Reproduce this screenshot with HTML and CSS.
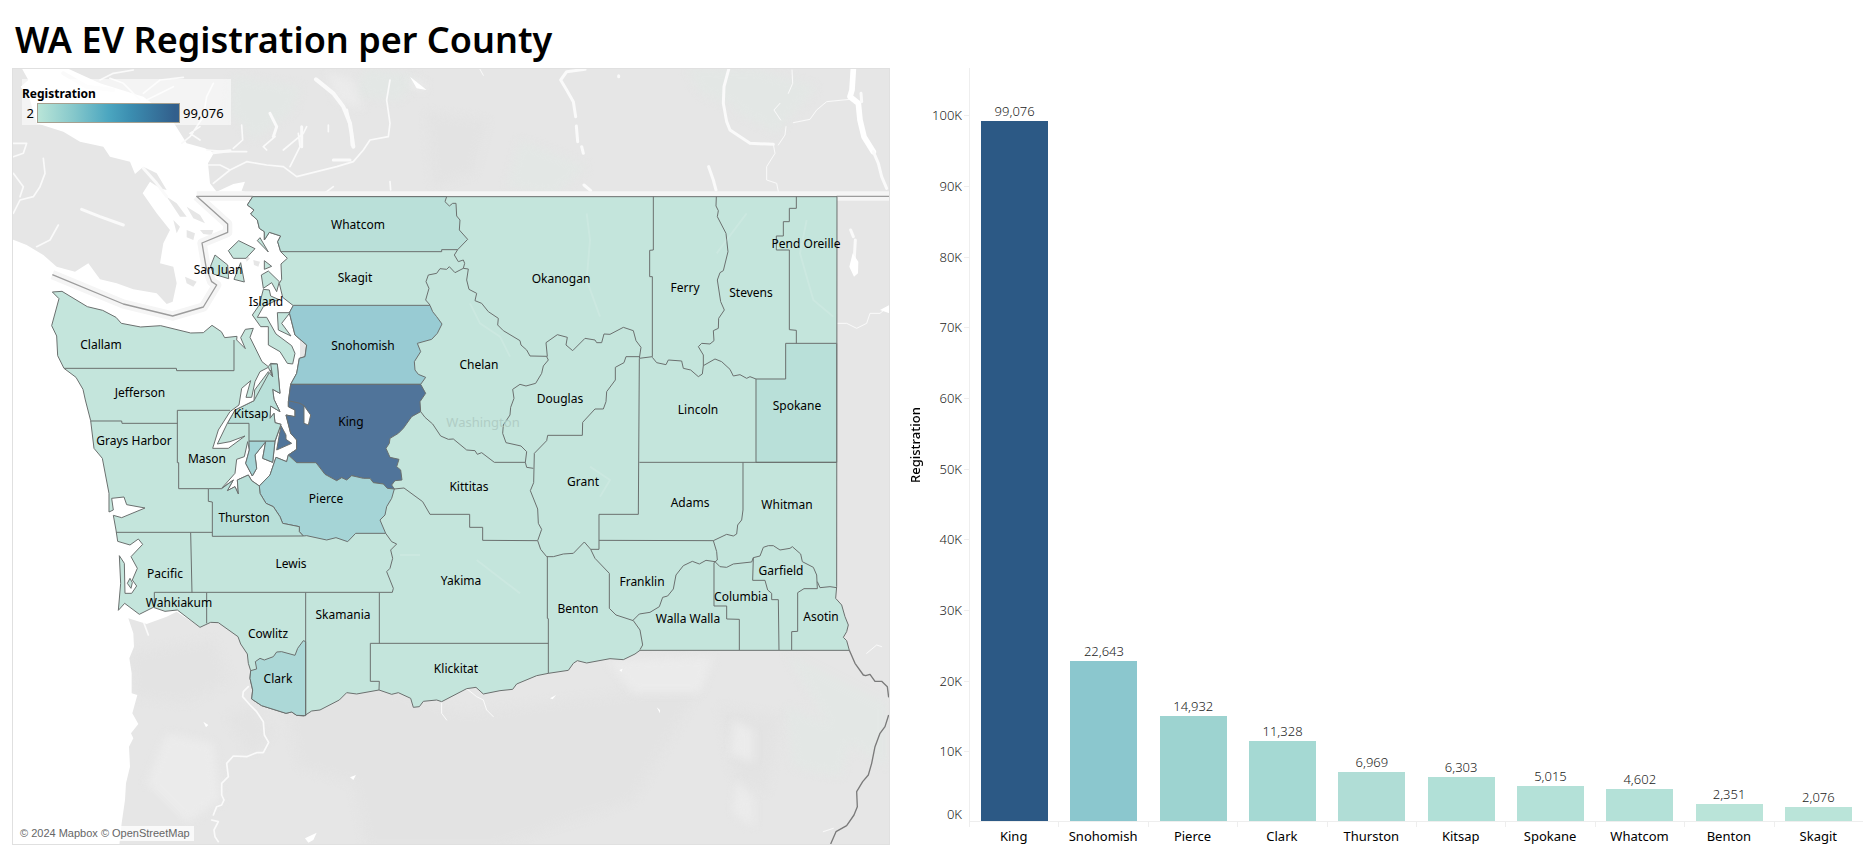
FILE: index.html
```
<!DOCTYPE html>
<html lang="en">
<head>
<meta charset="utf-8">
<title>WA EV Registration per County</title>
<link rel="stylesheet" href="styles.css">
</head>
<body>
<main class="dashboard">
<h1 class="title">WA EV Registration per County</h1>
<section class="map" aria-label="Registration map">
<svg class="map-canvas" viewBox="12 68 878 777" role="img" aria-label="Counties of Washington">
<g transform="scale(0.333333)">
<rect class="land" x="36" y="204" width="2634" height="2331"/>
<path class="tint" d="M1100,204L1260,230L1200,300L1060,290ZM700,230L900,260L880,330L760,420L690,330ZM1560,420L1760,500L1660,590L1520,560ZM2060,204L2300,210L2230,330L2100,280ZM2250,204L2450,260L2330,400L2200,330ZM2360,2120L2560,2200L2520,2330L2380,2300ZM2360,1960L2660,2110L2660,2300L2500,2200Z"/>
<path class="shade" d="M820,1960L1400,2140L1700,2100L2100,2060L1900,2400L1500,2535L1100,2535L1060,2350L900,2300ZM680,2150L760,2120L820,2200L750,2260ZM390,1960L640,1920L690,2040L560,2110L400,2090ZM2160,2120L2340,2150L2300,2380L2200,2330ZM1280,340L1460,360L1420,520L1300,560ZM200,520L420,600L380,760L220,700Z"/>
<path class="light" d="M500,2200L640,2230L660,2400L560,2470L440,2350ZM1820,1980L2140,1970L2100,2080L1900,2080ZM2200,2160L2260,2190L2260,2290L2190,2260ZM2210,2340L2260,2400L2260,2480L2200,2440ZM1220,230L1280,250L1270,275L1240,265ZM980,220L1060,240L1090,330L1010,300Z"/>
<path class="water" d="M65,204L200,204L300,250L430,290L510,350L560,430L615,445L642,458L624,490L630,550L650,575L700,552L735,545L725,572L780,590L900,600L900,1500L600,1700L600,1882L530,1835L500,1850L440,1872L385,1855L400,1900L402,1940L388,1975L395,2020L395,2080L412,2085L397,2140L415,2172L393,2200L400,2215L387,2240L390,2300L378,2350L375,2400L365,2470L358,2535L36,2535L36,204Z"/>
<path class="land" d="M36,204L65,204L85,240L62,260L90,300L110,370L190,395L240,425L310,440L330,470L390,485L405,522L430,500L470,520L500,570L480,565L450,545L428,580L470,640L510,690L490,730L480,790L520,800L530,850L518,905L500,912L470,880L400,868L350,850L300,838L265,790L225,815L170,800L130,765L80,735L36,718Z"/>
<path class="land" d="M500,590L530,610L560,650L540,650ZM560,620L600,645L615,670L580,655ZM600,690L640,690L635,705L610,702ZM560,690L585,700L580,720L560,712ZM520,660L540,680L530,700ZM555,830L590,845L580,860L560,850ZM760,780L780,785L775,800L762,795ZM735,765L750,775L740,785Z"/>
<g class="lakes">
<path class="w2" d="M300,240L340,220L400,210M330,235L370,250L420,300M430,280L480,240L550,232M440,300L520,260M640,250L620,290L610,350L570,410L545,430M600,380L570,400L600,420M620,450L680,455L740,455M625,495L660,495L690,510L740,485L800,495L850,500L890,530L950,515L1010,500L1060,485L1090,450L1110,420L1165,410L1170,370L1160,300L1170,240M640,550L690,510M725,375L728,420L700,445M800,450L790,440L825,410M895,400L900,440L870,500M850,450L910,400L920,380M40,430L80,430L70,460L40,470M130,475L135,520L120,560L100,590L60,600L40,640M40,520L70,560L60,590M175,675L150,720L110,740M985,375L985,395M960,590L1000,560M1170,545L1172,570"/>
<path class="w3" d="M810,340L830,380L820,410M245,628L300,650L370,675M640,458L690,452M430,505L470,550L500,590M905,380L905,440M1000,480L1050,480"/>
<path class="w4" d="M190,220L260,260L340,270M948,238L1000,280L1030,320L1050,370L1060,440"/>
<path class="w3" d="M1040,330L1055,400L1056,435M1755,208L1700,215L1682,240L1700,270L1720,305L1727,350M1729,378L1733,425M1745,440L1750,460M1752,555L1772,572M2186,208L2172,260L2170,310L2180,365L2190,390L2250,430L2320,433M2126,500L2140,540L2148,570"/>
<path class="w1" d="M2320,433L2325,460L2300,500L2300,540L2330,550L2335,575M2335,435L2355,405L2358,380M2380,368L2430,358L2450,330L2480,305L2550,298M2376,210L2378,250L2365,280M2340,310L2322,330L2342,360M1440,208L1450,226M2500,970L2540,970L2570,985L2600,970L2610,940L2640,940L2665,920M2600,1960L2630,1935L2645,1940M2470,2495L2500,2485"/>
<path class="w5" d="M2560,208L2556,270L2550,290L2575,310L2580,360L2592,410L2620,455"/>
<path class="w3" d="M2620,455L2635,490L2645,530L2660,565M2583,280L2585,305M2552,690L2560,710M2566,720L2562,790M1856,227L1856,230"/>
<path class="lake" d="M2558,760L2575,785L2574,820L2562,830L2548,800ZM2640,930L2668,915L2668,940ZM1970,2122L1980,2130L1980,2140ZM1230,230L1280,270L1250,265ZM610,2165L625,2175L618,2182ZM1050,2332L1068,2325L1060,2340ZM915,2515L950,2498L940,2520L925,2528ZM1858,2010L1868,2006L1864,2016ZM1650,2095L1668,2085L1658,2098Z"/>
<path class="w2" d="M745,2060L730,2075L728,2090L750,2115L770,2135L790,2165L793,2205L806,2227L790,2258L770,2258L740,2270L700,2268L680,2290L685,2330L665,2350L665,2385L672,2400L665,2415L650,2420L640,2445M635,2460L655,2465L642,2490L645,2510L655,2525M432,1870L445,1905"/>
<path class="w1" d="M1400,2066L1430,2090L1450,2100L1460,2130L1480,2150M1325,2105L1325,2140L1340,2160"/>
</g>
<path class="halo" d="M590,588H2670M590,588L683,672L683,697L606,729L618,800L635,845L650,855L610,921L518,948L370,912L157,824"/>
<path class="state-line" d="M2510,589H2670M758,589H590L683,672L683,697L606,729L618,800L635,845L650,855L610,921L518,948L370,912L157,824"/>
<path class="state-line dark" d="M2548,1951L2565,1990L2590,2025L2597,2027L2610,2023L2625,2044L2645,2044L2662,2060L2666,2092M2666,2145L2655,2180L2640,2200L2625,2240L2615,2290L2605,2325L2588,2345L2570,2375L2572,2420L2562,2445L2540,2477L2508,2495L2492,2532"/>
<g class="county">
<path d="M758,590H2511L2510,1760L2507,1795L2525,1815L2535,1850L2545,1875L2540,1895L2530,1912L2540,1922L2548,1951H1920L1905,1962L1870,1979L1830,1976L1760,1989L1732,1982L1720,1990L1705,2011L1645,2020L1610,2027L1550,2052L1538,2068L1500,2072L1450,2082L1428,2062L1400,2066L1325,2105L1310,2100L1270,2104L1258,2120L1240,2122L1232,2095L1195,2078L1175,2083L1137,2070L1070,2082L1040,2078L1018,2100L960,2130L935,2133L912,2148L890,2146L875,2136L858,2140L785,2117L755,2097L758,2070L750,2035L752,2012L745,1990L742,1962L722,1932L714,1910L655,1868L632,1867L600,1882L532,1830L495,1834L460,1822L418,1843L374,1810L355,1831L362,1750L358,1667L373,1690L375,1780H395L410,1758L397,1740L412,1705L393,1670L428,1633L415,1617L390,1635L353,1624L348,1590L340,1546L365,1553L435,1524L380,1514L372,1491L335,1495L340,1530L327,1536V1480L307,1375L282,1345L272,1262L256,1200L249,1168L228,1132L192,1105L173,1067L170,1008L155,977L177,896L157,876L186,874L262,920L308,931L348,952L364,970L422,981L482,977L572,999L610,998L636,976L664,995L674,1013L711,1009L710,1020L736,1046L722,1013L736,988L760,985L750,1012L786,1085L805,1100L812,1090L832,1092L840,1180L818,1168L822,1198L840,1235L812,1218L810,1255L822,1240L825,1268L843,1273L825,1325L818,1387L788,1375L797,1325L765,1365L770,1405L757,1428L737,1390L748,1350L743,1325L733,1370L710,1378L705,1420L665,1465L700,1440L682,1472L705,1460L715,1482L712,1440L745,1425L755,1442L778,1458L810,1425L828,1372L860,1385L865,1365L890,1348L890,1320L872,1300L858,1245L885,1250V1230L865,1220V1205L872,1153L890,1120L898,1075L915,1070L920,1035L885,1005L868,938L880,917L848,892L838,850L845,838L843,792L862,775L842,755L833,725L842,708L808,697L793,720V695L778,685L772,660L752,642L762,630L742,615Z"/>
<path class="c-whatcom" d="M758,590H1340L1335,605L1348,618L1358,610H1368L1370,648L1380,660L1378,690L1403,718L1373,749H1325V755H842L833,725L842,708L808,697L793,720V695L778,685L772,660L752,642L762,630L742,615Z"/>
<path class="c-snohomish" d="M880,916H1290L1298,935L1310,950L1326,972L1312,1000L1295,1018L1252,1030L1262,1055L1243,1085L1245,1110L1255,1123L1277,1132L1262,1153H872L890,1120L898,1075L915,1070L920,1035L885,1005L868,938Z"/>
<path class="c-king" d="M872,1153H1262L1277,1180L1260,1205L1262,1235L1235,1250L1210,1285L1195,1300L1170,1315L1168,1330L1158,1345L1170,1372L1197,1378L1190,1400L1202,1410L1206,1440L1185,1442L1175,1455L1183,1467H1162L1150,1452L1120,1448L1110,1435H1090L1055,1427L1040,1440L1025,1433L1010,1442L975,1423L948,1388H890L865,1365L890,1348V1320L872,1300L858,1245L885,1250V1230L865,1220V1205ZM843,1277L858,1305V1318L875,1330L830,1350Z"/>
<path class="c-pierce" d="M778,1458L810,1425L828,1372L860,1385L865,1365L890,1388H948L975,1423L1010,1442L1025,1433L1040,1440L1055,1427L1090,1435H1110L1120,1448L1150,1452L1162,1465L1183,1467L1175,1495L1160,1520L1155,1545L1140,1560L1157,1600H1067L1043,1625L1008,1613L980,1620L920,1607L910,1608L898,1595V1580L848,1570L840,1550L820,1520L798,1510L780,1480ZM747,1323H825L818,1387L788,1375L797,1325L765,1365L770,1405L757,1428L737,1390L748,1350Z"/>
<path class="c-thurston" d="M625,1466H665L700,1440L682,1472L705,1460L715,1482L712,1440L745,1425L755,1442L778,1458L780,1480L798,1510L820,1520L840,1550L848,1570L898,1580V1595L910,1608L637,1609V1506L625,1504Z"/>
<path class="c-thurston" d="M812,1110L762,1202L705,1230L682,1270H747V1323H825L843,1273L825,1268L822,1240L810,1255L812,1218L840,1235L822,1198L818,1168L840,1180L832,1092H812L818,1130Z"/>
<path class="c-spokane" d="M2357,1030H2510V1387H2268V1137H2357Z"/>
<path class="c-clark" d="M752,2012L770,2007L766,1985L780,1975L793,1980L820,1970L830,1956L845,1955L885,1966L893,1945L910,1922L917,1925V2147L890,2146L875,2136L858,2140L785,2117L755,2097L758,2070L750,2035Z"/>
<path d="M790,868L808,870L812,888L835,898L790,920L772,952H800L828,1002L875,1037L885,1060L878,1092L862,1090L840,1055L805,1035V980H782L757,945L778,915ZM832,938H870L845,970L873,1008L835,990ZM784,825L805,813L838,845L830,875L815,848L790,865ZM685,752L716,722L765,746L738,775H700ZM645,765L683,795L686,836L640,822L632,798ZM722,788L733,846L702,838ZM780,713L805,756L772,722ZM793,782L815,799L793,808ZM382,1750L390,1735L397,1748L393,1765Z"/>
<path class="inlet" d="M805,1102L780,1115L765,1145L755,1192H738L752,1142L725,1165L717,1215L690,1235L655,1290L638,1345H685L735,1308L690,1325L652,1332L682,1270L705,1230L762,1202L764,1170L805,1115L818,1130ZM912,1217L932,1245L925,1275L912,1270Z"/>
<path class="line" d="M1373,749L1363,765L1375,785L1390,780L1394,790L1390,805L1365,818L1348,800L1340,808L1320,806L1310,820L1285,825L1278,845L1287,865L1277,900L1290,915M1390,805L1405,807L1400,840L1407,868L1430,880L1425,902L1445,910L1465,935L1495,955L1493,975L1510,992L1560,1022L1563,1035L1580,1050L1590,1068L1642,1069L1638,1028L1672,1004L1702,1012L1698,1035L1718,1052L1755,1015L1785,1020L1790,1028H1805L1812,1002L1830,1003L1870,982L1900,992L1908,1022L1923,1042L1918,1075L1957,1070V830L1949,830V751L1960,750V590"/>
<path class="line" d="M2149,590L2148,618L2155,632L2152,650L2178,700L2184,755L2170,812L2160,818L2152,840L2162,905L2173,930L2156,955L2155,985L2140,992L2142,1022L2130,1032L2105,1030L2095,1040L2110,1065L2110,1097L2107,1122L2095,1130L2072,1110L2050,1105L2045,1083L2005,1080L1998,1094L1970,1088L1957,1072M2110,1097L2145,1077L2165,1085L2190,1108L2200,1128L2220,1124L2240,1135L2250,1130L2268,1137M2389,590V625H2368V665H2350V708H2329V750H2368V989L2389,991V1030M1918,1387H2510M2229,1387V1530L2225,1560L2213,1575L2210,1602L2200,1608L2180,1603L2140,1622L2150,1655L2152,1680L2142,1688"/>
<path class="line" d="M1640,1070L1645,1080L1630,1098L1625,1120L1607,1150L1578,1158L1560,1153L1538,1168L1542,1195L1532,1222L1530,1245L1510,1275L1508,1300L1518,1328L1563,1338L1580,1355L1576,1387L1580,1402L1600,1405M1576,1387H1483L1445,1358L1432,1363L1425,1352L1400,1350L1360,1317L1345,1318L1322,1308L1298,1272L1275,1252L1262,1235M1918,1070H1878L1872,1088L1846,1102V1140L1820,1175L1818,1205L1810,1227H1785L1748,1267L1747,1306H1643L1640,1322L1603,1360L1601,1448L1591,1472L1613,1527L1615,1570L1625,1588L1613,1622L1622,1648L1640,1670H1660L1690,1662L1720,1660L1753,1626L1772,1648H1797V1543H1915L1918,1076M1797,1621L2140,1622"/>
<path class="line" d="M1183,1467L1212,1464L1268,1505L1290,1543H1409V1582H1448V1621L1612,1622M1157,1600L1175,1625L1190,1632L1172,1650L1178,1675L1170,1705L1160,1715L1180,1765L1177,1777H463V1822M1138,1778V1930M1645,1930H1111V2044H1138L1137,2070M1642,1670V1855L1645,1856V2020M917,1778V2146M620,1778V1870M572,1598L576,1778M348,1597H637M536,1466H625M532,1231H690M532,1231V1388H536V1466M272,1263H365L366,1270H532M192,1105H529L530,1112H702V1020M865,1202L900,1210L912,1217"/>
<path class="line" d="M1772,1648L1785,1675L1828,1720V1825L1848,1845L1900,1862L1920,1890L1928,1935L1920,1949M1898,1862L1918,1842L1950,1837L1978,1820L1988,1792L2003,1788L2020,1767L2028,1725L2050,1697L2077,1684L2098,1692L2118,1681L2145,1685L2160,1700L2180,1702L2200,1692L2255,1686L2260,1673L2280,1668L2290,1642L2305,1637H2320L2340,1650L2370,1645L2377,1640L2402,1662L2407,1685L2440,1702L2450,1725L2452,1766H2412L2393,1778V1894L2375,1895V1950M2452,1745L2460,1763L2490,1760L2510,1763M2260,1673L2258,1741H2295L2303,1770L2315,1780V1799H2335L2337,1950M2142,1688V1818H2180V1857L2218,1858V1950"/>
</g>
<path class="rivers-on-land" d="M1410,910L1440,970L1500,1010L1530,1070M1760,640L1770,720L1760,840L1800,950M2240,640L2150,760M2420,660L2400,760L2440,900L2500,950M1770,1400L1830,1440L1800,1490M1200,1665H1260M1430,1680L1560,1780"/>
</g>
<text class="state-name" x="483" y="427">Washington</text>
<g class="names">
<text x="358" y="229">Whatcom</text>
<text x="218" y="274">San Juan</text>
<text x="355" y="282">Skagit</text>
<text x="266" y="306">Island</text>
<text x="101" y="349">Clallam</text>
<text x="140" y="397">Jefferson</text>
<text x="251" y="418">Kitsap</text>
<text x="134" y="445">Grays Harbor</text>
<text x="363" y="350">Snohomish</text>
<text x="351" y="426">King</text>
<text x="326" y="503">Pierce</text>
<text x="244" y="522">Thurston</text>
<text x="207" y="463">Mason</text>
<text x="291" y="568">Lewis</text>
<text x="165" y="578">Pacific</text>
<text x="179" y="607">Wahkiakum</text>
<text x="268" y="638">Cowlitz</text>
<text x="343" y="619">Skamania</text>
<text x="278" y="683">Clark</text>
<text x="461" y="585">Yakima</text>
<text x="456" y="673">Klickitat</text>
<text x="578" y="613">Benton</text>
<text x="469" y="491">Kittitas</text>
<text x="583" y="486">Grant</text>
<text x="479" y="369">Chelan</text>
<text x="560" y="403">Douglas</text>
<text x="698" y="414">Lincoln</text>
<text x="690" y="507">Adams</text>
<text x="561" y="283">Okanogan</text>
<text x="685" y="292">Ferry</text>
<text x="751" y="297">Stevens</text>
<text x="806" y="248">Pend Oreille</text>
<text x="797" y="410">Spokane</text>
<text x="787" y="509">Whitman</text>
<text x="642" y="586">Franklin</text>
<text x="688" y="623">Walla Walla</text>
<text x="741" y="601">Columbia</text>
<text x="781" y="575">Garfield</text>
<text x="821" y="621">Asotin</text>
</g>
</svg>
<div class="legend">
<h2 class="legend-title">Registration</h2>
<div class="legend-scale"><span class="legend-min">2</span><span class="legend-ramp"></span><span>99,076</span></div>
</div>
<p class="credit">© 2024 Mapbox © OpenStreetMap</p>
</section>
<section class="chart" aria-label="Registration by county">
<h2 class="axis-title">Registration</h2>
<div class="axis">
<div class="head"></div>
<div class="step"><span>100K</span></div>
<div class="step"><span>90K</span></div>
<div class="step"><span>80K</span></div>
<div class="step"><span>70K</span></div>
<div class="step"><span>60K</span></div>
<div class="step"><span>50K</span></div>
<div class="step"><span>40K</span></div>
<div class="step"><span>30K</span></div>
<div class="step"><span>20K</span></div>
<div class="step"><span>10K</span><span class="zero">0K</span></div>
</div>
<div class="plot">
<div class="column"><span>99,076</span><div class="bar b1" style="height:92.9%"></div></div>
<div class="column"><span>22,643</span><div class="bar b2" style="height:21.2%"></div></div>
<div class="column"><span>14,932</span><div class="bar b3" style="height:14%"></div></div>
<div class="column"><span>11,328</span><div class="bar b4" style="height:10.6%"></div></div>
<div class="column"><span>6,969</span><div class="bar b5" style="height:6.5%"></div></div>
<div class="column"><span>6,303</span><div class="bar b6" style="height:5.9%"></div></div>
<div class="column"><span>5,015</span><div class="bar b7" style="height:4.7%"></div></div>
<div class="column"><span>4,602</span><div class="bar b7" style="height:4.3%"></div></div>
<div class="column"><span>2,351</span><div class="bar b8" style="height:2.2%"></div></div>
<div class="column"><span>2,076</span><div class="bar b8" style="height:1.9%"></div></div>
</div>
<div class="categories">
<span>King</span><span>Snohomish</span><span>Pierce</span><span>Clark</span><span>Thurston</span><span>Kitsap</span><span>Spokane</span><span>Whatcom</span><span>Benton</span><span>Skagit</span>
</div>
</section>
</main>
</body>
</html>
```
FILE: styles.css
```
* { box-sizing: border-box; }
body {
  margin: 0;
  background: #fff;
  color: #000;
  font-family: "Noto Sans", "Open Sans", sans-serif;
  font-size: 13px;
  line-height: 16px;
}
.dashboard {
  display: grid;
  grid-template-columns: 878fr 975fr;
  padding: 12px 8px 10px 12px;
}
.title {
  grid-column: 1 / -1;
  margin: 0 0 0 3px;
  font-size: 36px;
  line-height: 56px;
  font-weight: 600;
}

/* Map */
.map {
  position: relative;
  outline: 1px solid #e0e0e0;
  outline-offset: -1px;
}
.map-canvas { display: block; width: 100%; height: auto; }
.land { fill: #e6e6e6; }
.tint { fill: #e3e7e5; }
.shade { fill: #e3e3e3; }
.light { fill: #ebebeb; }
.tint, .shade, .light { filter: blur(12px); }
.water, .lake { fill: #fff; }
.lakes path { stroke-linejoin: round; stroke-linecap: round; }
.w1, .w2, .w3, .w4, .w5 { fill: none; stroke: #fafafa; }
.w1 { stroke-width: 3; }
.w2 { stroke-width: 5; }
.w3 { stroke-width: 9; }
.w4 { stroke-width: 12; }
.w5 { stroke-width: 17; stroke: #fff; }
.halo { fill: none; stroke: #f5f5f5; stroke-width: 28; stroke-linejoin: round; }
.state-line { fill: none; stroke: #9c9c9c; stroke-width: 4; stroke-linejoin: round; }
.state-line.dark { stroke: #7a7a7a; }
.county path {
  fill: #c4e5dc;
  stroke: #6a6f6e;
  stroke-width: 3;
  stroke-linejoin: round;
}
.county .line { fill: none; }
.county .inlet { fill: #fff; }
.county .c-whatcom { fill: #bae0d9; }
.county .c-snohomish { fill: #98cbd3; }
.county .c-king { fill: #50749a; }
.county .c-pierce { fill: #a5d4d6; }
.county .c-thurston { fill: #b9e0d9; }
.county .c-spokane { fill: #b9e0d9; }
.county .c-clark { fill: #acd8d7; }
.rivers-on-land { fill: none; stroke: #fff; stroke-opacity: 0.12; stroke-width: 6; }
.names { font-size: 12px; text-anchor: middle; }
.state-name { font-size: 13px; fill: #b0cdc5; text-anchor: middle; }

.legend {
  position: absolute;
  top: 11px;
  left: 10px;
  width: 209px;
  height: 46px;
  padding-top: 6px;
  background: rgba(255, 255, 255, 0.55);
}
.legend-title { margin: 0; font-size: 12px; font-weight: 700; line-height: 18px; }
.legend-scale { display: flex; align-items: center; gap: 3px; line-height: 20px; }
.legend-min { width: 12px; text-align: right; }
.legend-ramp {
  width: 143px;
  height: 20px;
  border: 1px solid #a7a08f;
  background: linear-gradient(90deg, #b9e5d8, #86c8cb 25%, #4ba6c0 50%, #3b8db0 66%, #325f8c 97%);
}
.credit {
  position: absolute;
  left: 4px;
  bottom: 4px;
  margin: 0;
  padding: 0 4px;
  background: rgba(255, 255, 255, 0.75);
  color: #666;
  font: 11px/15px "Liberation Sans", Arial, sans-serif;
}

/* Bar chart */
.chart {
  display: grid;
  grid-template-columns: 38px 41px 1fr;
  grid-template-rows: 1fr 23px;
  padding-right: 2px;
}
.axis-title {
  margin: 0;
  justify-self: end;
  writing-mode: vertical-rl;
  transform: rotate(180deg);
  font-size: 13px;
  font-weight: 500;
  line-height: 26px;
  text-align: center;
}
.axis {
  display: grid;
  grid-template-rows: 67fr repeat(10, 100fr);
  color: #222;
  font-weight: 300;
  text-align: right;
}
.step {
  display: flex;
  flex-direction: column;
  justify-content: space-between;
  min-height: 0;
  padding-right: 7px;
  background: linear-gradient(#eee, #eee) right top / 5px 1px no-repeat;
}
.step span { margin-top: -8px; }
.step .zero { margin-top: 0; }
.plot {
  display: grid;
  grid-template-columns: repeat(10, 1fr);
  border-left: 1px solid #eee;
  border-bottom: 1px solid #eee;
}
.column {
  display: flex;
  flex-direction: column;
  align-items: center;
  justify-content: flex-end;
  min-height: 0;
  color: #222;
  font-weight: 300;
}
.column span { line-height: 20px; }
.bar { width: 75%; flex: none; }
.b1 { background: #2c5985; }
.b2 { background: #8bc7ce; }
.b3 { background: #9dd3d0; }
.b4 { background: #a5d9d3; }
.b5 { background: #b0ddd6; }
.b6 { background: #b1e0d7; }
.b7 { background: #b4e1d8; }
.b8 { background: #bae4d9; }
.categories {
  grid-column: 3;
  display: grid;
  grid-template-columns: repeat(10, 1fr);
  text-align: center;
}
.categories span {
  padding-top: 6px;
  background: linear-gradient(#eee, #eee) left top / 1px 5px no-repeat;
}
```
